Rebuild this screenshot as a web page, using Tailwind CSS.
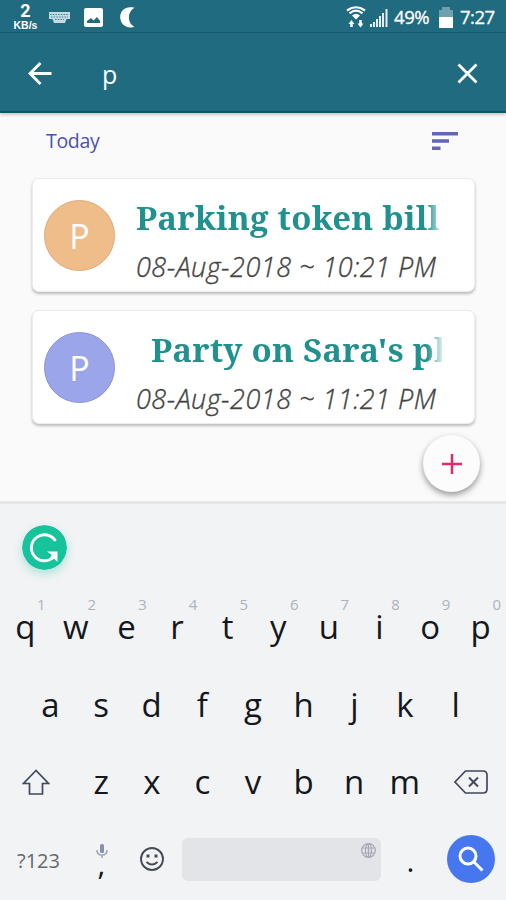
<!DOCTYPE html>
<html lang="en">
<head>
<meta charset="utf-8">
<title>Reminders</title>
<script src="https://cdn.jsdelivr.net/npm/@tailwindcss/browser@4"></script>
</head>
<body class="w-[506px] h-[900px] overflow-hidden flex flex-col bg-[#fafafa] font-['Open_Sans','Noto_Sans',sans-serif]">
<header class="relative z-10 h-[113px] shrink-0 bg-[#216b80] border-b-2 border-[#0c5468] shadow-[0_2px_3px_rgba(0,0,0,0.2)] text-white">
  <div class="h-[33px] flex items-center justify-between pl-[13px] pr-[11px] border-b border-[#155a6d]">
    <div class="flex items-center">
      <div class="w-[25px] pt-[3px] flex flex-col items-center font-bold">
        <span class="h-[14px] text-[18px] leading-[14px] font-['Roboto',sans-serif]">2</span>
        <span class="mt-[2px] text-[10.500px] leading-[11px] font-['Liberation_Sans',sans-serif]">KB/s</span>
      </div>
      <svg class="ml-[11px] mt-[3px]" width="21" height="12" viewBox="0 0 21 12"><path d="M0 0h21v7h-3.500l-1.500 4H5L3.500 7H0z" fill="#c3dbe1"/><path d="M1 2.500h19M2 5h17M6 7.500h9" stroke="#417f91" stroke-dasharray="1.500 1.200"/></svg>
      <svg class="ml-[14px] mt-[2px]" width="19" height="19" viewBox="0 0 19 19"><rect width="19" height="19" rx="2" fill="#fff"/><path d="M3 15v-2l4-3 2.500 2.500L13 9l3 4v2z" fill="#216b80"/></svg>
      <svg class="ml-[17px] mt-[2px]" width="15" height="21" viewBox="0 0 15 21"><path d="M14.500.8C3.500-1.500 0 5.500.2 10.500.4 16 4.500 22 14.500 20 7 16 7 5 14.500.8z" fill="#fff"/></svg>
    </div>
    <div class="flex items-center pt-[2px]">
      <svg width="20" height="22" viewBox="0 0 20 22" fill="none" stroke="#fff"><path d="M1 4.500Q10-2 19 4.500M3.500 7.300Q10 2 16.500 7.300" stroke-width="2.200"/><path d="M6 9.500q4-3.500 8 0l-4 4z" fill="#fff" stroke="none"/><path d="M5.500 21v-4M14.500 14v4" stroke-width="2.500"/><path d="M2.500 18l3-4 3 4zM11.500 17.500l3 4 3-4z" fill="#fff" stroke="none"/></svg>
      <svg class="ml-[4px]" width="18" height="19" viewBox="0 0 18 19" stroke="#e2eef1" stroke-width="2"><path d="M1 19v-3M4 19v-5M7 19v-8M10 19V8M13 19V5M16.500 19V1"/></svg>
      <span class="ml-[6px] w-[36px] text-[18.500px] leading-[24px] tracking-[-0.4px] whitespace-nowrap [-webkit-text-stroke:0.3px_#fff]">49%</span>
      <svg class="ml-[9px]" width="14" height="21" viewBox="0 0 14 21"><path d="M0 3h3V0h8v3h3v8H0z" fill="#6fa0ae"/><path d="M0 10h14v11H0z" fill="#fff"/></svg>
      <span class="ml-[7px] w-[35px] text-[18.500px] leading-[24px] tracking-[-0.5px] whitespace-nowrap [-webkit-text-stroke:0.3px_#fff]">7:27</span>
    </div>
  </div>
  <div class="h-[79px] flex items-center pl-[28px] pr-[28px] pt-[2px]">
    <svg width="24" height="23" viewBox="0 0 24 23" fill="none" stroke="#fff" stroke-width="2.800"><path d="M23.500 11.500H2.500M12.500 1L2 11.500 12.500 22"/></svg>
    <span class="ml-[50px] grow text-[25px] leading-[36px]">p</span>
    <svg width="21" height="21" viewBox="0 0 21 21" stroke="#fff" stroke-width="2.800"><path d="M1.500 1.500l18 18M19.500 1.500l-18 18"/></svg>
  </div>
</header>
<main class="relative h-[388px] shrink-0">
  <div class="h-[65px] flex justify-between pl-[46px] pr-[48px]">
    <h2 class="pt-[14px] text-[19.500px] leading-[28px] text-[#4a51ae] tracking-[-0.3px]">Today</h2>
    <svg class="mt-[19px]" width="26" height="18" viewBox="0 0 26 18" fill="#6266b5"><path d="M0 0h26v3.500H0zM0 7.200h17v3.500H0zM0 14.400h8.500v3.500H0z"/></svg>
  </div>
  <section class="flex flex-col gap-[18px] pl-[32px] pr-[31px]">
    <article class="h-[114px] flex rounded-[7px] bg-white border border-[#ececec] shadow-[0_2px_3px_rgba(0,0,0,0.25)] pl-[11px]">
      <div class="mt-[21px] size-[71px] shrink-0 rounded-full bg-[#efbd89] border border-[#dfab78] text-white text-[34px] flex items-center justify-center"><span class="leading-[40px]">P</span></div>
      <div class="ml-[21px] pt-[16px] w-[306px]">
        <h3 class="w-[306px] h-[46px] overflow-hidden whitespace-nowrap text-[33px] leading-[46px] font-bold text-[#21918d] font-['Noto_Serif','DejaVu_Serif_Condensed',serif] tracking-[0.22px] [mask-image:linear-gradient(to_right,#000_95%,transparent_101%)]">Parking token bill</h3>
        <p class="pt-[6px] whitespace-nowrap text-[27px] leading-[40px] italic font-light text-[#444] tracking-[0.5px] [-webkit-text-stroke:0.35px_#444]">08-Aug-2018 ~ 10:21 PM</p>
      </div>
    </article>
    <article class="h-[114px] flex rounded-[7px] bg-white border border-[#ececec] shadow-[0_2px_3px_rgba(0,0,0,0.25)] pl-[11px]">
      <div class="mt-[21px] size-[71px] shrink-0 rounded-full bg-[#9ba5ea] border border-[#8c92d5] text-white text-[34px] flex items-center justify-center"><span class="leading-[40px]">P</span></div>
      <div class="ml-[21px] pt-[16px] w-[306px]">
        <h3 class="w-[306px] h-[46px] pl-[15px] overflow-hidden whitespace-nowrap text-[33px] leading-[46px] font-bold text-[#21918d] font-['Noto_Serif','DejaVu_Serif_Condensed',serif] tracking-[0.22px] [mask-image:linear-gradient(to_right,#000_95%,transparent_101%)]">Party on Sara's pl</h3>
        <p class="pt-[6px] whitespace-nowrap text-[27px] leading-[40px] italic font-light text-[#444] tracking-[0.5px] [-webkit-text-stroke:0.35px_#444]">08-Aug-2018 ~ 11:21 PM</p>
      </div>
    </article>
  </section>
  <button class="absolute left-[423px] top-[322px] size-[57px] rounded-full bg-[#fcfcfc] shadow-[0_3px_6px_rgba(0,0,0,0.4)] flex items-center justify-center"><svg width="20" height="20" viewBox="0 0 20 20" stroke="#e22a6b" stroke-width="2.500"><path d="M0 10h20M10 0v20"/></svg></button>
</main>
<footer class="h-[399px] shrink-0 bg-[#f1f3f5] border-t-[3px] border-[#e5e7e8] text-[#15171c]">
  <div class="h-[85px] pl-[22px] pt-[21px]">
    <svg class="rounded-full shadow-[0_4px_9px_rgba(30,190,160,0.3)]" width="45" height="45" viewBox="0 0 45 45"><circle cx="22.500" cy="22.500" r="22.500" fill="#16c39a"/><path d="M33.500 16A13 13 0 1 0 31 32.500" fill="none" stroke="#fff" stroke-width="2.900"/><path d="M25 26.500h10.500v10.500l-3.300-3.300-2.500 1.500-1.500-2.500 1.500-2.700z" fill="#fff"/></svg>
  </div>
  <div class="h-[78px] grid grid-cols-10 text-center text-[33px] leading-[44px]">
    <div class="relative pt-[16px]">q<span class="absolute top-[5px] right-[5px] text-[15px] leading-[20px] text-[#aeb2bc]">1</span></div>
    <div class="relative pt-[16px]">w<span class="absolute top-[5px] right-[5px] text-[15px] leading-[20px] text-[#aeb2bc]">2</span></div>
    <div class="relative pt-[16px]">e<span class="absolute top-[5px] right-[5px] text-[15px] leading-[20px] text-[#aeb2bc]">3</span></div>
    <div class="relative pt-[16px]">r<span class="absolute top-[5px] right-[5px] text-[15px] leading-[20px] text-[#aeb2bc]">4</span></div>
    <div class="relative pt-[16px]">t<span class="absolute top-[5px] right-[5px] text-[15px] leading-[20px] text-[#aeb2bc]">5</span></div>
    <div class="relative pt-[16px]">y<span class="absolute top-[5px] right-[5px] text-[15px] leading-[20px] text-[#aeb2bc]">6</span></div>
    <div class="relative pt-[16px]">u<span class="absolute top-[5px] right-[5px] text-[15px] leading-[20px] text-[#aeb2bc]">7</span></div>
    <div class="relative pt-[16px]">i<span class="absolute top-[5px] right-[5px] text-[15px] leading-[20px] text-[#aeb2bc]">8</span></div>
    <div class="relative pt-[16px]">o<span class="absolute top-[5px] right-[5px] text-[15px] leading-[20px] text-[#aeb2bc]">9</span></div>
    <div class="relative pt-[16px]">p<span class="absolute top-[5px] right-[5px] text-[15px] leading-[20px] text-[#aeb2bc]">0</span></div>
  </div>
  <div class="h-[77px] px-[25px] pt-[16px] grid grid-cols-9 text-center text-[33px] leading-[44px]">
    <span>a</span><span>s</span><span>d</span><span>f</span><span>g</span><span>h</span><span>j</span><span>k</span><span>l</span>
  </div>
  <div class="h-[77px] pt-[16px] flex text-center text-[33px] leading-[44px]">
    <div class="w-[76px] pl-[22px] pt-[9px]"><svg width="28" height="26" viewBox="0 0 28 26" fill="none" stroke="#42485e" stroke-width="1.700"><path d="M14 1.500L1.500 14.500H7.500V25h13V14.500h6z"/></svg></div>
    <div class="w-[354px] grid grid-cols-7"><span>z</span><span>x</span><span>c</span><span>v</span><span>b</span><span>n</span><span>m</span></div>
    <div class="w-[76px] pl-[24px] pt-[10px]"><svg width="34" height="24" viewBox="0 0 34 24" fill="none" stroke="#42485e" stroke-width="1.700"><path d="M11.500 1H29q4 0 4 4v14q0 4-4 4H11.500L1 12z"/><path d="M15 7.500l9 9M24 7.500l-9 9" stroke-width="2"/></svg></div>
  </div>
  <div class="h-[79px] flex">
    <span class="w-[76px] pl-[17px] pt-[24px] text-[20px] leading-[32px] text-[#62686e]">?123</span>
    <div class="w-[51px] flex flex-col items-center pt-[23px]">
      <svg width="12" height="14" viewBox="0 0 12 14"><rect x="4" y="0" width="4" height="9" rx="1.500" fill="#888fb0"/><path d="M1 6q0 5 5 5t5-5M6 11v3" fill="none" stroke="#a3a8ba" stroke-width="1.600"/></svg>
      <span class="text-[30px] leading-[12px]">,</span>
    </div>
    <div class="w-[55px] pl-[13px] pt-[26px]"><svg width="24" height="24" viewBox="0 0 24 24" fill="none" stroke="#454a57" stroke-width="1.900"><circle cx="12" cy="12" r="11"/><path d="M6.500 15q5.500 5 11 0"/><path d="M6.500 9h3M14.500 9h3" stroke-width="3"/></svg></div>
    <div class="mt-[17px] w-[199px] h-[43px] rounded-[6px] bg-[#e3e4e8] flex justify-end pt-[5px] pr-[5px]"><svg width="15" height="15" viewBox="0 0 15 15" fill="none" stroke="#a4a8b3" stroke-width="1.200"><circle cx="7.500" cy="7.500" r="6.800"/><ellipse cx="7.500" cy="7.500" rx="3" ry="6.800"/><path d="M7.500 1v13M1.500 5h12M1.500 10h12"/></svg></div>
    <span class="w-[59px] pt-[18px] text-center text-[30px] leading-[44px]">.</span>
    <div class="ml-[7px] mt-[14px] size-[48px] rounded-full bg-[#4677ee] flex items-center justify-center"><svg width="26" height="26" viewBox="0 0 26 26" fill="none" stroke="#fff" stroke-width="3"><circle cx="10" cy="10" r="8"/><path d="M15.500 15.500l9 9"/></svg></div>
  </div>
</footer>
</body>
</html>
